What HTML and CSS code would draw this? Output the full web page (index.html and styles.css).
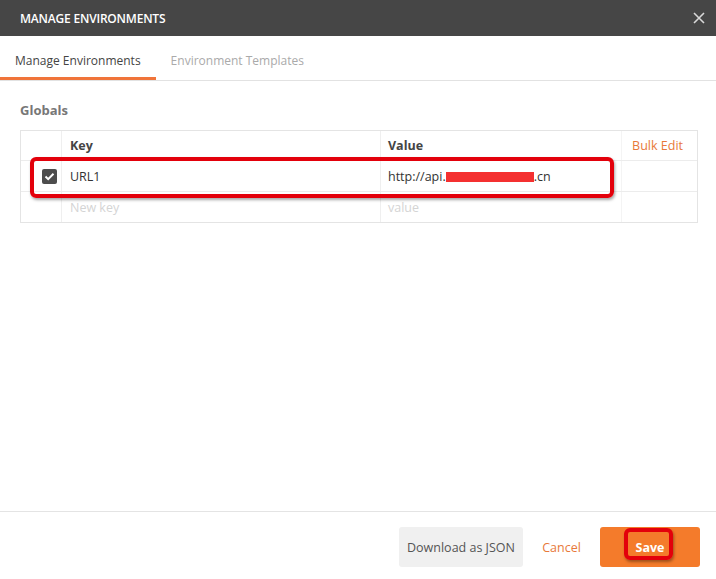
FILE: index.html
```html
<!DOCTYPE html>
<html>
<head>
<meta charset="utf-8">
<link rel="stylesheet" href="styles.css">
</head>
<body>
<div class="modal">
  <div class="header">
    <span class="title">MANAGE ENVIRONMENTS</span>
    <svg class="close" width="12" height="12" viewBox="0 0 12 12"><path d="M1 1L11 11M11 1L1 11" stroke="#d8d8d8" stroke-width="1.6" fill="none"/></svg>
  </div>
  <div class="tabs">
    <div class="tab active">Manage Environments</div>
    <div class="tab">Environment Templates</div>
  </div>
  <div class="content">
    <div class="section-title">Globals</div>
    <div class="table">
      <div class="row head">
        <div class="cell c-check"></div>
        <div class="cell c-key">Key</div>
        <div class="cell c-val">Value</div>
        <div class="cell c-bulk"><span class="bulk">Bulk Edit</span></div>
      </div>
      <div class="row">
        <div class="cell c-check">
          <span class="checkbox"><svg width="11" height="9" viewBox="0 0 11 9"><path d="M1.5 4.5L4.2 7.2L9.5 1.8" stroke="#fff" stroke-width="2" fill="none"/></svg></span>
        </div>
        <div class="cell c-key">URL1</div>
        <div class="cell c-val">http://api.<span class="redact">xxxxxxxxxxxxxx</span>.cn</div>
        <div class="cell c-bulk"></div>
      </div>
      <div class="row">
        <div class="cell c-check"></div>
        <div class="cell c-key placeholder">New key</div>
        <div class="cell c-val placeholder">value</div>
        <div class="cell c-bulk"></div>
      </div>
      <div class="highlight row-hl"></div>
    </div>
  </div>
  <div class="footer">
    <button class="btn btn-gray">Download as JSON</button>
    <button class="btn btn-link">Cancel</button>
    <button class="btn btn-orange">Save<span class="highlight save-hl"></span></button>
  </div>
</div>
</body>
</html>
```
FILE: styles.css
```css
html, body {
  margin: 0;
  padding: 0;
  height: 100%;
  background: #fff;
}
body {
  font-family: "Open Sans", "Noto Sans", sans-serif;
  color: #333;
}
.modal {
  display: flex;
  flex-direction: column;
  height: 100vh;
}
.header {
  height: 36px;
  background: #464646;
  display: flex;
  align-items: center;
  justify-content: space-between;
  padding: 0 11px 0 20px;
  flex-shrink: 0;
}
.title {
  color: #fff;
  font-size: 12px;
  font-weight: 600;
  letter-spacing: -0.2px;
}
.close {
  display: block;
}
.tabs {
  display: flex;
  height: 44px;
  border-bottom: 1px solid #e2e2e2;
  flex-shrink: 0;
}
.tab {
  padding: 8px 15px 0 15px;
  font-size: 12px;
  color: #aaa;
  display: flex;
  align-items: center;
  box-sizing: border-box;
  border-bottom: 3px solid transparent;
}
.tab.active {
  color: #444;
  border-bottom-color: #f0743a;
}
.content {
  flex: 1;
  padding: 20px 18px 0 20px;
}
.section-title {
  font-size: 13px;
  font-weight: 700;
  color: #777;
  height: 18px;
  line-height: 18px;
  margin-bottom: 11px;
}
.table {
  position: relative;
  border: 1px solid #e4e4e4;
}
.row {
  display: flex;
  height: 30px;
  border-bottom: 1px solid #ececec;
}
.row:nth-child(3) {
  border-bottom: none;
}
.row.head {
  height: 29px;
}
.cell {
  display: flex;
  align-items: center;
  font-size: 12.5px;
  box-sizing: border-box;
}
.c-check {
  width: 41px;
  border-right: 1px solid #efefef;
  justify-content: flex-start;
  padding-left: 21px;
}
.c-key {
  width: 319px;
  border-right: 1px solid #efefef;
  padding-left: 8px;
}
.c-val {
  width: 241px;
  padding-left: 7px;
  border-right: 1px solid #f4f4f4;
}
.c-bulk {
  flex: 1;
  justify-content: flex-end;
  padding-right: 14px;
}
.head .cell {
  font-weight: 700;
  color: #444;
}
.bulk {
  font-weight: 400;
  color: #e8793a;
  font-size: 12.5px;
}
.placeholder {
  color: #d4d4d4;
}
.checkbox {
  width: 15px;
  height: 15px;
  flex-shrink: 0;
  border-radius: 2px;
  background: #4d4d4d;
  display: flex;
  align-items: center;
  justify-content: center;
}
.checkbox svg {
  display: block;
}
.redact {
  display: inline-block;
  background: #f43030;
  color: transparent;
  width: 88px;
  height: 10px;
  overflow: hidden;
  font-size: 1px;
  margin-top: 1px;
}
.highlight {
  position: absolute;
  border: 4px solid #e3000b;
  border-radius: 6px;
  box-shadow: 1px 2px 3px rgba(0, 0, 0, 0.35);
  box-sizing: border-box;
  pointer-events: none;
}
.row-hl {
  left: 9px;
  top: 26px;
  width: 584px;
  height: 41px;
}
.footer {
  border-top: 1px solid #e4e4e4;
  height: 68px;
  box-sizing: border-box;
  display: flex;
  justify-content: flex-end;
  align-items: flex-start;
  padding: 15px 16px 0 0;
  flex-shrink: 0;
}
.btn {
  font-family: "Open Sans", "Noto Sans", sans-serif;
  font-size: 12.5px;
  border: none;
  height: 40px;
  border-radius: 3px;
  cursor: pointer;
  position: relative;
  margin: 0;
}
.btn-gray {
  background: #f0f0f0;
  color: #555;
  width: 124px;
  padding: 0;
}
.btn-link {
  background: transparent;
  color: #e8793a;
  padding: 0;
  width: 77px;
}
.btn-orange {
  background: #f47b2b;
  color: #fff;
  font-weight: 700;
  width: 100px;
  padding: 0;
}
.save-hl {
  left: 24px;
  top: 1px;
  width: 49px;
  height: 32px;
}
```
